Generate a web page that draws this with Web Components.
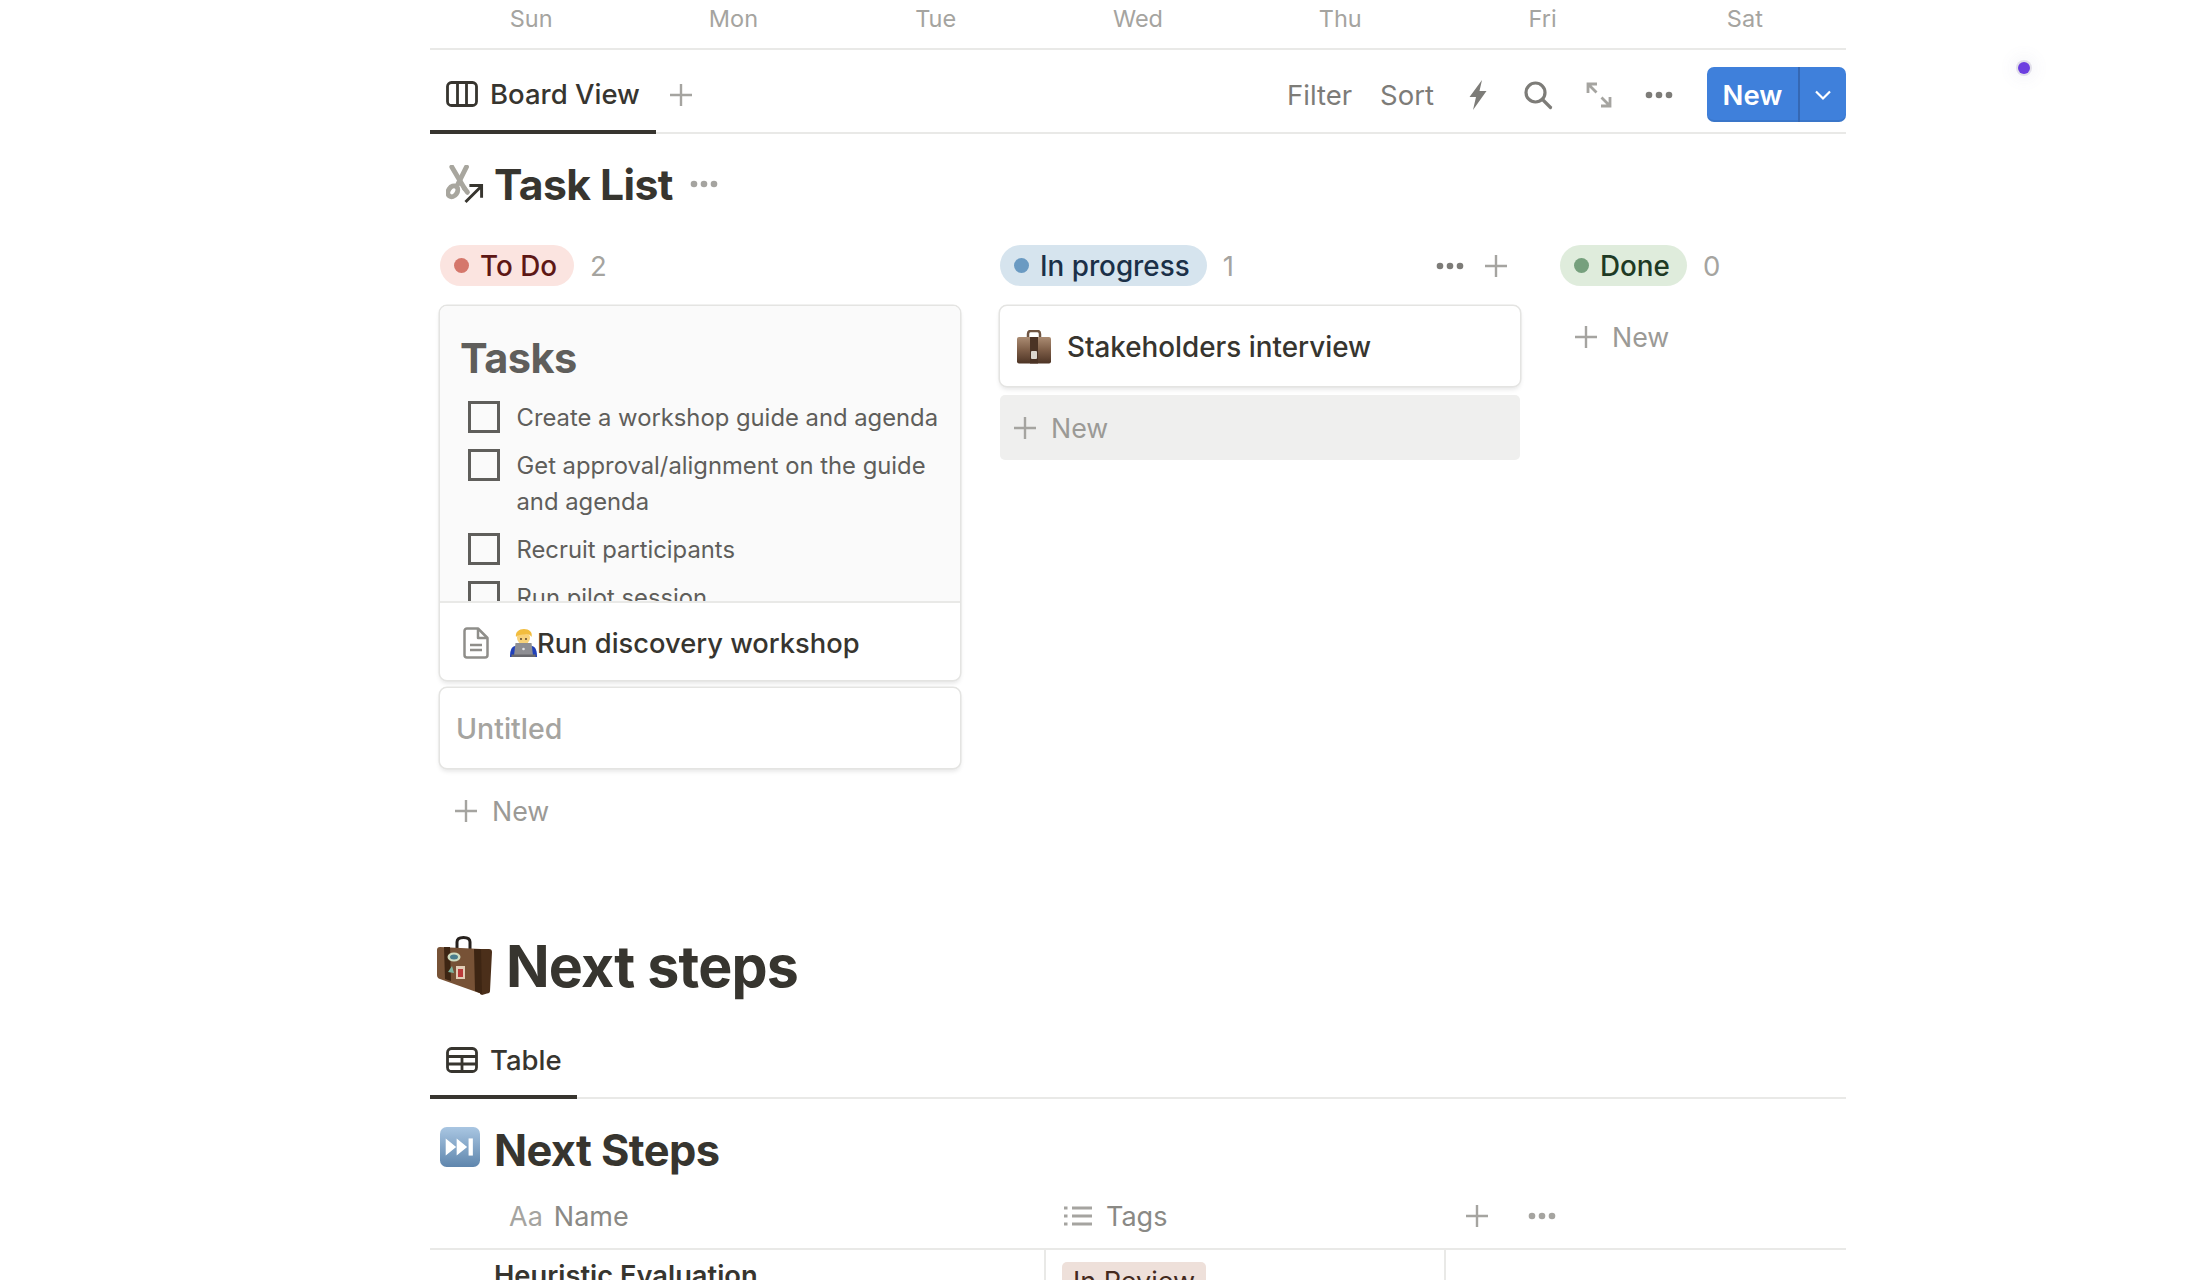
<!DOCTYPE html>
<html lang="en">
<head>
<meta charset="utf-8">
<title>Task List</title>
<style>
    html, body {
        margin: 0;
        height: 1280px;
        overflow: hidden;
        background: #fff;
    }

    body {
        font-family: Inter, "Liberation Sans", sans-serif;
        color: #37352f;
        position: relative;
    }
</style>
</head>
<body>
<nt-page>
    <nt-weekdays></nt-weekdays>

    <nt-tabbar active-width="226" height="84" pad="7">
        <nt-icon name="board" slot="tab"></nt-icon>
        <span slot="tab">Board View</span>
        <nt-icon name="plus" slot="after" style="margin-left:13px"></nt-icon>
        <nt-toolbar slot="actions"></nt-toolbar>
    </nt-tabbar>

    <nt-db-title size="42.7" top="16" bottom="27" more>
        <nt-icon name="scissors" slot="icon" style="margin-left:6px"></nt-icon>
        Task List
    </nt-db-title>

    <nt-board>
        <nt-column label="To Do" count="2" tone="red" width="522">
            <nt-card cover>
                <nt-tasks slot="cover"></nt-tasks>
                <nt-icon name="doc"></nt-icon>
                <nt-icon name="coder"></nt-icon>
                <span>Run discovery workshop</span>
            </nt-card>
            <nt-card muted><span>Untitled</span></nt-card>
            <nt-new top="12"></nt-new>
        </nt-column>
        <nt-column label="In progress" count="1" tone="blue" width="522" tools>
            <nt-card>
                <nt-icon name="briefcase"></nt-icon>
                <span>Stakeholders interview</span>
            </nt-card>
            <nt-new hover></nt-new>
        </nt-column>
        <nt-column label="Done" count="0" tone="green" width="250">
            <nt-new top="8"></nt-new>
        </nt-column>
    </nt-board>

    <nt-section-heading>
        <nt-icon name="suitcase" slot="icon"></nt-icon>
        Next steps
    </nt-section-heading>

    <nt-tabbar active-width="147" height="75" pad="0">
        <nt-icon name="table" slot="tab"></nt-icon>
        <span slot="tab">Table</span>
    </nt-tabbar>

    <nt-db-title size="43.4" top="17" bottom="0">
        <nt-icon name="forward" slot="icon" style="margin-top:-7px"></nt-icon>
        Next Steps
    </nt-db-title>

    <nt-table></nt-table>
</nt-page>
<nt-recorder-dot></nt-recorder-dot>

<script>
const ICONS = {
    board: `<svg width="32" height="26" viewBox="0 0 32 26" fill="none" stroke="#37352f" stroke-width="2.8"><rect x="1.5" y="1.5" width="29" height="23" rx="4"/><path d="M11.5 2v22M20.5 2v22"/></svg>`,
    table: `<svg width="32" height="26" viewBox="0 0 32 26" fill="none" stroke="#37352f" stroke-width="2.8"><rect x="1.5" y="1.5" width="29" height="23" rx="4"/><path d="M2 9.5h28M2 17h28M16 9.5v15"/></svg>`,
    plus: `<svg width="24" height="24" viewBox="0 0 24 24" fill="none" stroke="#a5a4a0" stroke-width="2.4"><path d="M12 1v22M1 12h22"/></svg>`,
    bolt: `<svg width="20" height="30" viewBox="0 0 20 30"><path fill="#7d7c78" d="M14 0 1.500 17H8L5 30 18.500 11H11.500z"/></svg>`,
    search: `<svg width="30" height="30" viewBox="0 0 30 30" fill="none" stroke="#7d7c78" stroke-width="3.2" stroke-linecap="round"><circle cx="12.500" cy="12.500" r="9.500"/><path d="M19.500 19.500 27.500 27.500"/></svg>`,
    expand: `<svg width="28" height="28" viewBox="0 0 28 28" fill="none" stroke="#a5a4a0" stroke-width="2.800"><path d="M3 12V3h9M3.500 3.500l8 8M25 16v9h-9M24.500 24.500l-8-8"/></svg>`,
    dots: `<svg width="28" height="8" viewBox="0 0 28 8" fill="#7d7c78"><circle cx="4" cy="4" r="3.300"/><circle cx="14" cy="4" r="3.300"/><circle cx="24" cy="4" r="3.300"/></svg>`,
    dotslight: `<svg width="28" height="8" viewBox="0 0 28 8" fill="#a5a4a0"><circle cx="4" cy="4" r="3.300"/><circle cx="14" cy="4" r="3.300"/><circle cx="24" cy="4" r="3.300"/></svg>`,
    chevron: `<svg width="18" height="12" viewBox="0 0 18 12" fill="none" stroke="#fff" stroke-width="2.200"><path d="M2 2.500 9 9.500 16 2.500"/></svg>`,
    scissors: `<svg width="39" height="39" viewBox="0 0 40 40" fill="none"><g stroke="#a8a69e" stroke-width="5" stroke-linecap="round"><path d="M6 2 19 24"/><path d="M21 2 12 20"/><ellipse cx="7" cy="27" rx="4.500" ry="6" transform="rotate(35 7 27)"/><path d="M19 24l3 4"/></g><path d="M20 38 36 22M24 21h12.500v12.500" stroke="#37352f" stroke-width="3" fill="none"/></svg>`,
    doc: `<svg width="26" height="32" viewBox="0 0 26 32" fill="none" stroke="#8f8e8a" stroke-width="2.500" stroke-linejoin="round"><path d="M4 1.500h11L24.500 11v17a2.500 2.500 0 0 1-2.500 2.500H4A2.500 2.500 0 0 1 1.500 28V4A2.500 2.500 0 0 1 4 1.500z"/><path d="M15 2v9h9M7 18h12M7 23h12"/></svg>`,
    list: `<svg width="28" height="22" viewBox="0 0 28 22" fill="none" stroke="#a5a4a0" stroke-width="2.800"><path d="M8 3h20M8 11h20M8 19h20M0 3h3.500M0 11h3.500M0 19h3.500"/></svg>`,
    coder: `<svg width="27" height="28" viewBox="0 0 27 28"><circle cx="13.500" cy="9" r="6.500" fill="#f8d27a"/><path fill="#f2bd3e" d="M6 8C5 3 9 0 14 0s9 3 7.500 8c-1-2-3-3-5-3-3 1-8 0-10.500 3z"/><circle cx="11" cy="10" r=".9" fill="#4a3520"/><circle cx="16" cy="10" r=".9" fill="#4a3520"/><path fill="#2040b8" d="M0 28c0-6 1-10 5-11h17c4 1 5 5 5 11z"/><path fill="#8e8e93" d="M5.500 14h16L23 26.500H4z"/><circle cx="13.500" cy="20" r="1.300" fill="#e2e2e4"/><path fill="#68686d" d="M1.500 25.500h24V28h-24z"/></svg>`,
    briefcase: `<svg width="36" height="34" viewBox="0 0 36 34"><defs><linearGradient id="bc" x1="0" y1="0" x2="0" y2="1"><stop offset="0" stop-color="#ab8c73"/><stop offset=".5" stop-color="#7d5d47"/><stop offset="1" stop-color="#4d3425"/></linearGradient></defs><path fill="none" stroke="#6f5542" stroke-width="2.500" d="M12 9V4c0-2 1-3 2.500-3h7C23 1 24 2 24 4v5"/><rect x="1" y="7" width="34" height="26.500" rx="2" fill="url(#bc)"/><rect x="14" y="7" width="8" height="26.500" fill="#4b3325"/><rect x="15" y="21" width="6" height="8" rx="1" fill="#ddd7cf"/></svg>`,
    suitcase: `<svg width="58" height="60" viewBox="0 0 56 60"><path fill="none" stroke="#26201c" stroke-width="3" d="M20 13V6c0-3 2-4.500 6.500-4.500S33 3 33 6v8"/><path fill="#775236" d="M3 11 44 13 45 58 3 43Q0 42 0 39V14Q0 11 3 11z"/><path fill="#4b2f1a" d="M40 13h12q3 0 3 3l-2 39q0 2-3 2.500L45 59 43 58z"/><path fill="#3d2513" d="M7 11h6l1 34-6-2zM37 13h7l1 45-7-3z"/><ellipse cx="17" cy="21" rx="6.500" ry="4.500" fill="#cfdcc0"/><ellipse cx="17" cy="21" rx="4" ry="2.500" fill="#4a7d8c"/><path fill="#7eb6a0" d="M11 36l4-6 2 7z"/><rect x="19" y="30" width="9" height="13" fill="#e2cdb6"/><rect x="21" y="33" width="5" height="8" fill="#bb3b3b"/></svg>`,
    forward: `<svg width="40" height="40" viewBox="0 0 42 42"><defs><linearGradient id="fw" x1="0" y1="0" x2="0" y2="1"><stop offset="0" stop-color="#a9c6e2"/><stop offset="1" stop-color="#5f86ad"/></linearGradient></defs><rect width="42" height="42" rx="7" fill="url(#fw)"/><path fill="#fff" d="M6 12l11 9-11 9zM17.500 12l11 9-11 9z"/><rect x="30" y="12" width="4.500" height="18" fill="#fff"/></svg>`
};

class NtIcon extends HTMLElement {
    connectedCallback() {
        this.attachShadow({ mode: 'open' }).innerHTML = `
            <style>:host { display: inline-flex; flex: none; align-items: center; justify-content: center; } svg { display: block; }</style>
            ${ICONS[this.getAttribute('name')] || ''}`;
    }
}

class NtPage extends HTMLElement {
    connectedCallback() {
        this.attachShadow({ mode: 'open' }).innerHTML = `
            <style>:host { display: block; width: 1416px; margin-left: 430px; }</style>
            <slot></slot>`;
    }
}

class NtWeekdays extends HTMLElement {
    connectedCallback() {
        const days = ['Sun', 'Mon', 'Tue', 'Wed', 'Thu', 'Fri', 'Sat'];
        this.attachShadow({ mode: 'open' }).innerHTML = `
            <style>
                :host {
                    display: grid;
                    grid-template-columns: repeat(7, 1fr);
                    height: 48px;
                    border-bottom: 2px solid #e9e9e7;
                    font-size: 23.5px;
                    color: #a5a4a0;
                    text-align: center;
                    line-height: 38px;
                }
            </style>
            ${days.map(d => `<div>${d}</div>`).join('')}`;
    }
}

class NtTabbar extends HTMLElement {
    connectedCallback() {
        const pad = this.getAttribute('pad') || 0;
        this.attachShadow({ mode: 'open' }).innerHTML = `
            <style>
                :host {
                    display: flex;
                    align-items: stretch;
                    height: ${this.getAttribute('height')}px;
                    box-sizing: border-box;
                    border-bottom: 2px solid #e9e9e7;
                    font-size: 27.5px;
                    font-weight: 500;
                }
                .tab {
                    display: flex;
                    align-items: center;
                    gap: 12px;
                    width: ${this.getAttribute('active-width')}px;
                    box-sizing: border-box;
                    padding: ${pad}px 0 0 16px;
                    margin-bottom: -2px;
                    border-bottom: 4px solid #37352f;
                }
                .after { display: flex; align-items: center; padding-top: ${pad}px; }
                .actions { display: flex; align-items: center; margin-left: auto; padding-top: ${pad}px; }
            </style>
            <div class="tab"><slot name="tab"></slot></div>
            <div class="after"><slot name="after"></slot></div>
            <div class="actions"><slot name="actions"></slot></div>`;
    }
}

class NtToolbar extends HTMLElement {
    connectedCallback() {
        this.attachShadow({ mode: 'open' }).innerHTML = `
            <style>
                :host { display: flex; align-items: center; color: #7d7c78; font-size: 27.5px; font-weight: 400; }
                .filter { margin-right: 28px; }
                .sort { margin-right: 34px; }
                nt-icon.bolt { margin-right: 35px; }
                nt-icon.search { margin-right: 32px; }
                nt-icon.expand { margin-right: 32px; }
                nt-icon.dots { margin-right: 34px; }
                .new {
                    display: flex;
                    align-items: stretch;
                    width: 139px;
                    height: 55px;
                    border-radius: 7px;
                    background: #3f80db;
                    box-shadow: inset 0 -2px 0 rgba(0, 0, 0, .08);
                    color: #fff;
                    font-weight: 600;
                }
                .label { width: 91px; display: flex; align-items: center; justify-content: center; border-right: 2px solid #3568b4; }
                .caret { flex: 1; display: flex; align-items: center; justify-content: center; }
            </style>
            <span class="filter">Filter</span>
            <span class="sort">Sort</span>
            <nt-icon class="bolt" name="bolt"></nt-icon>
            <nt-icon class="search" name="search"></nt-icon>
            <nt-icon class="expand" name="expand"></nt-icon>
            <nt-icon class="dots" name="dots"></nt-icon>
            <div class="new"><div class="label">New</div><div class="caret"><nt-icon name="chevron"></nt-icon></div></div>`;
    }
}

class NtDbTitle extends HTMLElement {
    connectedCallback() {
        const size = this.getAttribute('size');
        this.attachShadow({ mode: 'open' }).innerHTML = `
            <style>
                :host {
                    display: flex;
                    align-items: center;
                    height: 68px;
                    padding: ${this.getAttribute('top')}px 0 ${this.getAttribute('bottom')}px 10px;
                    font-size: ${size}px;
                    font-weight: 700;
                    letter-spacing: -.6px;
                }
                .icon { display: flex; width: 54px; }
                .more { margin-left: 17px; display: flex; }
            </style>
            <div class="icon"><slot name="icon"></slot></div>
            <div><slot></slot></div>
            ${this.hasAttribute('more') ? '<div class="more"><nt-icon name="dotslight"></nt-icon></div>' : ''}`;
    }
}

class NtBoard extends HTMLElement {
    connectedCallback() {
        this.attachShadow({ mode: 'open' }).innerHTML = `
            <style>:host { display: flex; gap: 38px; padding-left: 9px; height: 683px; }</style>
            <slot></slot>`;
    }
}

const TONES = {
    red: ['#fbe4e0', '#5d1715', '#d5776b'],
    blue: ['#d6e4ee', '#1b3048', '#6a9ac2'],
    green: ['#dfecdc', '#1e3a24', '#76a07d']
};

class NtColumn extends HTMLElement {
    connectedCallback() {
        const [bg, fg, dot] = TONES[this.getAttribute('tone')];
        this.attachShadow({ mode: 'open' }).innerHTML = `
            <style>
                :host { display: flex; flex-direction: column; flex: none; width: ${this.getAttribute('width')}px; }
                .head { display: flex; align-items: center; height: 41px; margin-bottom: 20px; }
                .pill {
                    display: inline-flex;
                    align-items: center;
                    gap: 11px;
                    height: 41px;
                    margin-left: 1px;
                    padding: 0 17px 0 14px;
                    border-radius: 21px;
                    background: ${bg};
                    color: ${fg};
                    font-size: 27.8px;
                    font-weight: 500;
                }
                .dot { width: 15px; height: 15px; border-radius: 50%; background: ${dot}; }
                .count { margin-left: 16px; color: #a5a4a0; font-size: 27.5px; }
                .tools { display: flex; align-items: center; gap: 20px; margin-left: auto; margin-right: 13px; }
                .cards { display: flex; flex-direction: column; gap: 8px; }
            </style>
            <div class="head">
                <span class="pill"><span class="dot"></span>${this.getAttribute('label')}</span>
                <span class="count">${this.getAttribute('count')}</span>
                ${this.hasAttribute('tools') ? '<span class="tools"><nt-icon name="dots"></nt-icon><nt-icon name="plus"></nt-icon></span>' : ''}
            </div>
            <div class="cards"><slot></slot></div>`;
    }
}

class NtCard extends HTMLElement {
    connectedCallback() {
        const cover = this.hasAttribute('cover');
        const muted = this.hasAttribute('muted');
        this.attachShadow({ mode: 'open' }).innerHTML = `
            <style>
                :host {
                    display: block;
                    border-radius: 7px;
                    background: #fff;
                    overflow: hidden;
                    box-shadow: 0 0 0 1.5px #e4e4e2, 0 3px 5px rgba(15, 15, 15, .12);
                    margin: 0 1px;
                    font-size: ${muted ? 28.5 : cover ? 27.3 : 27.8}px;
                    font-weight: 500;
                    color: ${muted ? '#a5a4a0' : '#37352f'};
                }
                .cover { display: ${cover ? 'block' : 'none'}; box-sizing: border-box; height: 296.5px; overflow: hidden; border-bottom: 2px solid #e9e9e7; background: #fafafa; }
                .row { display: flex; align-items: center; box-sizing: border-box; height: ${cover ? 77 : 80}px; padding: ${cover ? 4 : 2}px 0 0 ${cover ? 23 : 16}px; }
                ::slotted(nt-icon[name="doc"]) { margin-right: 21px; }
                ::slotted(nt-icon[name="briefcase"]) { margin-right: 15px; }
            </style>
            <div class="cover"><slot name="cover"></slot></div>
            <div class="row"><slot></slot></div>`;
    }
}

class NtTasks extends HTMLElement {
    connectedCallback() {
        const items = ['Create a workshop guide and agenda', 'Get approval/alignment on the guide and agenda', 'Recruit participants', 'Run pilot session'];
        this.attachShadow({ mode: 'open' }).innerHTML = `
            <style>
                :host { display: block; padding: 24.5px 14px 0 20px; color: #5f5e5b; font-weight: 400; font-size: 23.8px; line-height: 36px; }
                h3 { margin: 0 0 15px; font-size: 41.5px; line-height: 54px; font-weight: 700; letter-spacing: -.5px; }
                .item { display: flex; gap: 16.5px; margin-bottom: 12px; padding-left: 8px; }
                .box { flex: none; box-sizing: border-box; width: 32px; height: 32px; margin-top: 1px; border: 3px solid #5f5e5b; }
            </style>
            <h3>Tasks</h3>
            ${items.map(t => `<div class="item"><span class="box"></span><span>${t}</span></div>`).join('')}`;
    }
}

class NtNew extends HTMLElement {
    connectedCallback() {
        const hover = this.hasAttribute('hover');
        this.attachShadow({ mode: 'open' }).innerHTML = `
            <style>
                :host {
                    display: flex;
                    align-items: center;
                    gap: 14px;
                    height: ${hover ? 65 : 46}px;
                    margin: ${hover ? 1 : this.getAttribute('top')}px ${hover ? 1 : 2}px 0;
                    padding-left: 13px;
                    border-radius: 5px;
                    background: ${hover ? '#efefee' : 'transparent'};
                    color: #9b9a96;
                    font-size: 26.8px;
                }
            </style>
            <nt-icon name="plus"></nt-icon><span>New</span>`;
    }
}

class NtSectionHeading extends HTMLElement {
    connectedCallback() {
        this.attachShadow({ mode: 'open' }).innerHTML = `
            <style>
                :host {
                    display: flex;
                    align-items: center;
                    height: 76px;
                    margin-bottom: 20px;
                    padding-left: 6px;
                    font-size: 57.3px;
                    font-weight: 700;
                    letter-spacing: -.8px;
                }
                .icon { display: flex; width: 70px; }
            </style>
            <div class="icon"><slot name="icon"></slot></div>
            <div><slot></slot></div>`;
    }
}

class NtTable extends HTMLElement {
    connectedCallback() {
        this.attachShadow({ mode: 'open' }).innerHTML = `
            <style>
                :host { display: block; font-size: 27px; }
                .head, .row { display: grid; grid-template-columns: 616px 400px 1fr; }
                .head { height: 66px; box-sizing: border-box; border-bottom: 2px solid #e9e9e7; color: #8a8985; }
                .head > div { display: flex; align-items: center; }
                .name { padding-left: 79px; gap: 11px; }
                .name i { font-style: normal; color: #a5a4a0; }
                .tags { padding-left: 18px; gap: 14px; }
                .add { padding-left: 19px; gap: 39px; }
                .row > div { height: 60px; box-sizing: border-box; border-right: 2px solid #e9e9e7; }
                .row > div:last-child { border-right: 0; }
                .title { padding: 8px 0 0 64px; font-size: 27.3px; font-weight: 600; line-height: 36px; }
                .cell { padding: 12px 0 0 16px; }
                .tag { display: inline-block; padding: 1px 11px; border-radius: 5px; background: #eee0da; color: #442a1e; line-height: 38px; font-size: 27px; }
            </style>
            <div class="head">
                <div class="name"><i>Aa</i><span>Name</span></div>
                <div class="tags"><nt-icon name="list"></nt-icon><span>Tags</span></div>
                <div class="add"><nt-icon name="plus"></nt-icon><nt-icon name="dotslight"></nt-icon></div>
            </div>
            <div class="row">
                <div class="title">Heuristic Evaluation</div>
                <div class="cell"><span class="tag">In Review</span></div>
                <div></div>
            </div>`;
    }
}

class NtRecorderDot extends HTMLElement {
    connectedCallback() {
        this.attachShadow({ mode: 'open' }).innerHTML = `
            <style>
                :host {
                    position: absolute;
                    left: 2018px;
                    top: 62px;
                    width: 12px;
                    height: 12px;
                    border-radius: 50%;
                    background: #6c3fe0;
                    box-shadow: 0 0 0 2px #e2e0ea, 0 0 14px 8px rgba(120, 110, 170, .05);
                }
            </style>`;
    }
}

customElements.define('nt-icon', NtIcon);
customElements.define('nt-page', NtPage);
customElements.define('nt-weekdays', NtWeekdays);
customElements.define('nt-tabbar', NtTabbar);
customElements.define('nt-toolbar', NtToolbar);
customElements.define('nt-db-title', NtDbTitle);
customElements.define('nt-board', NtBoard);
customElements.define('nt-column', NtColumn);
customElements.define('nt-card', NtCard);
customElements.define('nt-tasks', NtTasks);
customElements.define('nt-new', NtNew);
customElements.define('nt-section-heading', NtSectionHeading);
customElements.define('nt-table', NtTable);
customElements.define('nt-recorder-dot', NtRecorderDot);
</script>
</body>
</html>
